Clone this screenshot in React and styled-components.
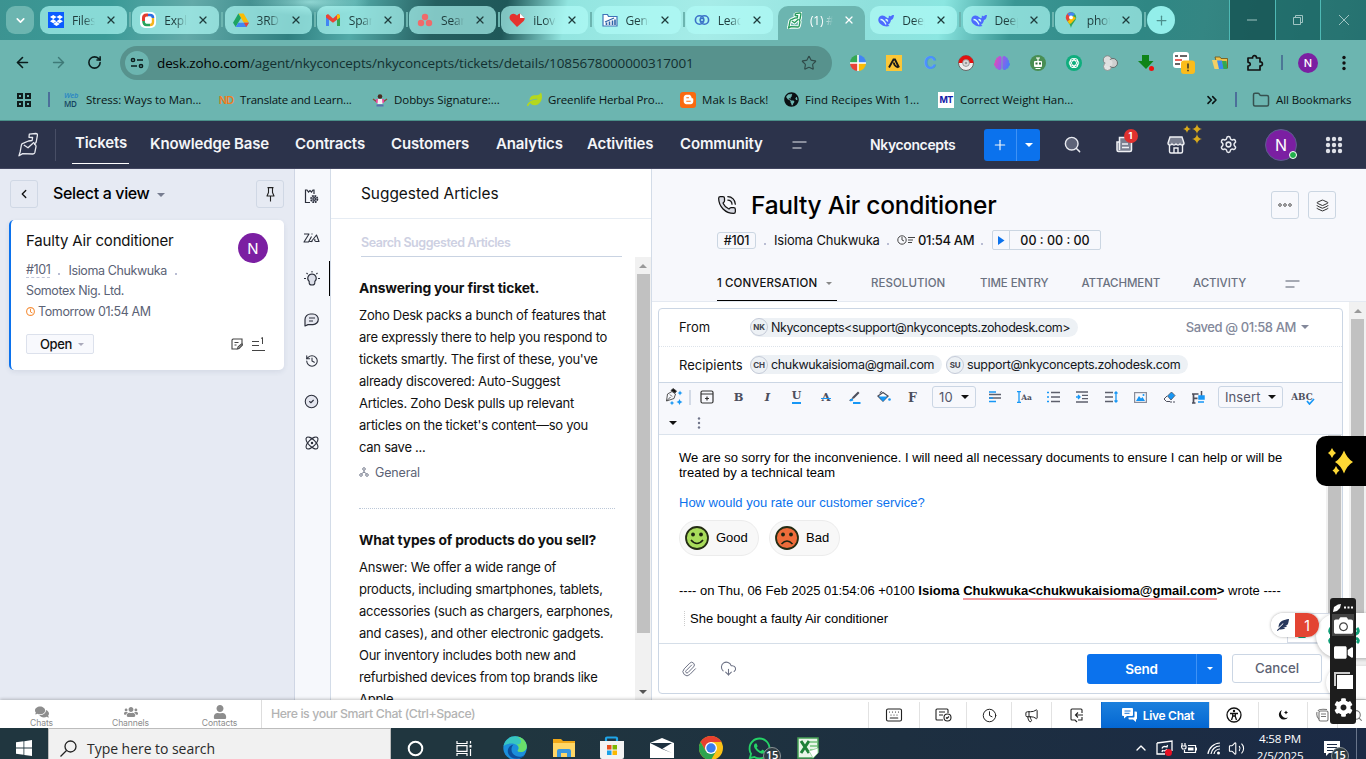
import React from "react";
import styled, { createGlobalStyle, css } from "styled-components";
import {
  FaDropbox, FaBloggerB, FaGlobeAmericas, FaLeaf, FaBrain, FaComments,
  FaUsers, FaUser, FaFeatherAlt, FaWhatsapp, FaCog, FaCamera, FaVideo, FaHeart,
} from "react-icons/fa";
import {
  ArrowLeft, ArrowRight, RotateCw, Star, Folder, ChevronsRight, ChevronDown, ChevronLeft, X, Plus,
  Search, History, CircleCheck, Atom, PhoneCall, Layers, Paperclip,
  CloudDownload, Keyboard, Clock, Megaphone, Settings, Volume2, ChevronUp,
} from "lucide-react";

const UI = '"Inter", "Liberation Sans", sans-serif';
const SEGOE = '"Open Sans", "Noto Sans", sans-serif';

const GlobalStyle = createGlobalStyle`
  * { box-sizing: border-box; }
  html, body { margin: 0; height: 759px; overflow: hidden; background: #fff; }
  svg { display: block; flex: none; }
`;

const Page = styled.div`
  position: relative;
  width: 1366px;
  height: 759px;
  overflow: hidden;
  display: flex;
  flex-direction: column;
  font-family: ${UI};
  color: #111;
`;

const Text = styled.span`
  font-size: ${(p) => p.$size || 13}px;
  font-weight: ${(p) => p.$weight || 400};
  letter-spacing: ${(p) => p.$track || 0}px;
  color: ${(p) => p.$color || "inherit"};
  white-space: nowrap;
`;

/* ---------- browser chrome ---------- */

const TabStrip = styled.div`
  height: 40px;
  flex: none;
  display: flex;
  padding-left: 6px;
  background:
    radial-gradient(60px 14px at 310px 2px, rgba(180, 245, 240, 0.7), transparent),
    linear-gradient(100deg, #3c9391 0, #3a9a97 110px, #63aaa9 190px, #2f7f80 290px, #52aaa8 350px,
      #255f60 430px, #1f5859 500px, #92e5e0 560px, #a6ece8 700px, #8fe0dc 860px, #8be6e1 930px,
      #3a9694 1000px, #2f8784 1130px, #348683 1190px, #2b7471 1366px);
`;

const RoundButton = styled.div`
  width: 28px;
  height: 28px;
  margin-top: 6px;
  border-radius: ${(p) => (p.$circle ? 14 : 9)}px;
  background: ${(p) => (p.$circle ? "#93eeea" : "#6cb5b0")};
  display: flex;
  align-items: center;
  justify-content: center;
`;

const Tabs = styled.div`
  display: flex;
  width: 1107px;
  margin-left: 6px;
  font-family: ${SEGOE};
`;

const TabSlot = styled.div`
  flex: 1 1 0;
  height: 40px;
  display: flex;
  padding-top: 6px;
`;

const Tab = styled.div`
  width: 87px;
  height: ${(p) => (p.$active ? 34 : 28)}px;
  padding: 0 10px 0 8px;
  display: flex;
  align-items: center;
  border-radius: ${(p) => (p.$active ? "10px 10px 0 0" : "9px")};
  background: ${(p) => (p.$active ? "#6cb5b0" : "rgba(178, 252, 248, 0.66)")};
  color: ${(p) => (p.$active ? "#fff" : "#1f3d3d")};
  padding-bottom: ${(p) => (p.$active ? 6 : 0)}px;
`;

const TabTitle = styled.span`
  width: 24px;
  margin: 0 9px 0 8px;
  overflow: hidden;
  font-size: 12px;
  letter-spacing: -0.2px;
  white-space: nowrap;
  mask-image: linear-gradient(90deg, #000 50%, transparent 96%);
`;

const TabSeparator = styled.i`
  width: 2px;
  height: 15px;
  margin: 6px 0 0 2px;
  background: ${(p) => (p.$hidden ? "transparent" : "#6cb5b0")};
`;

const WindowControls = styled.div`
  margin-left: auto;
  width: 137px;
  display: flex;
`;

const WindowButton = styled.div`
  flex: 1;
  display: flex;
  align-items: center;
  justify-content: center;
  border-left: 1px solid #4fb9b5;
  background: ${(p) => p.$bg};
`;

const Toolbar = styled.div`
  height: 45px;
  flex: none;
  display: flex;
  align-items: center;
  background: #6cb5b0;
  color: #0a1c1c;
`;

const Slot = styled.div`
  width: ${(p) => p.$w}px;
  flex: none;
  display: flex;
  align-items: center;
  justify-content: ${(p) => p.$justify || "center"};
`;

const Omnibox = styled.div`
  width: 712px;
  height: 34px;
  margin: 1px 8px 0 8px;
  padding: 0 15px 0 5px;
  border-radius: 17px;
  background: #57928d;
  display: flex;
  align-items: center;
  font-family: ${SEGOE};
  color: #123030;
  b { font-weight: 400; color: #000; }
`;

const SiteInfo = styled.div`
  width: 24px;
  height: 24px;
  margin-right: 8px;
  border-radius: 12px;
  background: #6cb5b0;
  display: flex;
  align-items: center;
  justify-content: center;
`;

const Url = styled.span`
  flex: 1;
  font-size: 13.5px;
  letter-spacing: -0.11px;
  white-space: nowrap;
`;

const Divider = styled.i`
  width: 2px;
  height: 15px;
  background: ${(p) => p.$color || "#4c7796"};
`;

const ChromeAvatar = styled.div`
  width: 20px;
  height: 20px;
  border-radius: 50%;
  background: #7b1fa2;
  color: #fff;
  font: 500 11px ${UI};
  display: flex;
  align-items: center;
  justify-content: center;
`;

const Bookmarks = styled.div`
  height: 36px;
  flex: none;
  display: flex;
  align-items: center;
  padding-bottom: 6px;
  border-bottom: 1px solid #4a8f89;
  background: #6cb5b0;
  font-family: ${SEGOE};
  color: #0a1414;
`;

const Bookmark = styled.div`
  width: ${(p) => p.$w}px;
  flex: none;
  display: flex;
  align-items: center;
  gap: 6px;
  font-size: 11.5px;
  letter-spacing: ${(p) => p.$track ?? -0.2}px;
  white-space: nowrap;
`;

const Badge16 = styled.span`
  width: 16px;
  height: 16px;
  flex: none;
  display: flex;
  align-items: center;
  justify-content: center;
  border-radius: ${(p) => p.$r || 0}px;
  background: ${(p) => p.$bg || "transparent"};
  color: ${(p) => p.$c || "#000"};
  font: ${(p) => p.$weight || 700} ${(p) => p.$size || 11}px/8px ${UI};
  letter-spacing: -0.8px;
`;

const WebMdMark = styled.span`
  width: 16px;
  flex: none;
  display: flex;
  flex-direction: column;
  gap: 1px;
  font: 600 8px/8px "Open Sans", sans-serif;
  letter-spacing: -0.3px;
  color: #14425f;
  i { color: #2a86c4; font-size: 7.5px; line-height: 7px; }
`;

/* ---------- application header ---------- */

const AppHeader = styled.header`
  height: 48px;
  flex: none;
  display: flex;
  align-items: center;
  background: #2c334b;
  border-bottom: 1px solid #424660;
  color: #f4f5f8;
`;

const HeaderRule = styled.i`
  width: 1px;
  height: 32px;
  background: #484e65;
  margin-right: 16px;
`;

const NavItem = styled.a`
  width: ${(p) => p.$w}px;
  height: 47px;
  flex: none;
  display: flex;
  align-items: center;
  padding: 0 0 3px 1px;
  font-size: 15px;
  font-weight: 600;
  letter-spacing: -0.14px;
  white-space: nowrap;
`;

const NavActive = styled.span`
  width: 57px;
  height: 38px;
  margin: 3px 0 0 -1px;
  padding: 0 0 4px 3px;
  display: flex;
  align-items: center;
  border-bottom: 1px solid #fff;
`;

const AddButton = styled.div`
  width: 56px;
  height: 32px;
  flex: none;
  display: flex;
  align-items: center;
  border-radius: 3px;
  background: #0b72ed;
`;

const AddPart = styled.div`
  width: ${(p) => p.$w}px;
  height: 100%;
  display: flex;
  align-items: center;
  justify-content: center;
  border-left: ${(p) => (p.$rule ? "1px solid #3f92f5" : "0")};
`;

const Caret = styled.i`
  width: 0;
  height: 0;
  flex: none;
  border: ${(p) => p.$s || 4}px solid transparent;
  border-top-color: ${(p) => p.$c || "#222"};
  border-bottom: 0;
  margin: ${(p) => p.$m || 0};
`;

const Relative = styled.div`
  position: relative;
  display: flex;
`;

const CountBadge = styled.span`
  position: absolute;
  left: 8px;
  top: -7px;
  width: 14px;
  height: 14px;
  border-radius: 50%;
  background: #e0312f;
  color: #fff;
  font: 700 9px/14px ${UI};
  text-align: center;
`;

const Stars = styled.svg`
  position: absolute;
  left: 16px;
  top: -12px;
`;

const Avatar = styled.div`
  position: relative;
  width: ${(p) => p.$s}px;
  height: ${(p) => p.$s}px;
  flex: none;
  border-radius: 50%;
  background: #7b1fa2;
  color: #fff;
  display: flex;
  align-items: center;
  justify-content: center;
  font-size: ${(p) => p.$font}px;
  border: ${(p) => (p.$ring ? "1px solid #5a5f8c" : "0")};
`;

const Online = styled.i`
  position: absolute;
  right: -1px;
  bottom: 1px;
  width: 8px;
  height: 8px;
  border-radius: 50%;
  background: #22b04b;
  border: 1px solid #fff;
`;

/* ---------- main columns ---------- */

const Main = styled.main`
  height: 531px;
  flex: none;
  display: flex;
`;

const ListPane = styled.section`
  width: 295px;
  flex: none;
  padding: 11px 10px 0 9px;
  background: #e6eaf3;
  border-right: 1px solid #cfd6e4;
`;

const ListHeader = styled.div`
  height: 28px;
  display: flex;
  align-items: center;
  padding-left: 1px;
`;

const ViewPicker = styled.div`
  width: 218px;
  height: 28px;
  padding: 0 0 2px 15px;
  display: flex;
  align-items: center;
`;

const SquareButton = styled.div`
  width: 28px;
  height: 28px;
  flex: none;
  display: flex;
  align-items: center;
  justify-content: center;
  border: 1px solid ${(p) => p.$line || "#d0d8e5"};
  border-radius: 3px;
`;

const TicketCard = styled.article`
  width: 275px;
  height: 150px;
  margin-top: 12px;
  padding: 11px 16px 0 15px;
  background: #fff;
  border-left: 2px solid #0b72ed;
  border-radius: 5px;
  box-shadow: 0 2px 5px rgba(60, 80, 120, 0.1);
`;

const CardTop = styled.div`
  display: flex;
  justify-content: space-between;
  height: 34px;
  margin-bottom: -4px;
`;

const MetaRow = styled.div`
  height: ${(p) => p.$h || 20}px;
  display: flex;
  align-items: center;
  gap: ${(p) => p.$gap || 0}px;
  font-size: 12.5px;
  letter-spacing: -0.38px;
  color: #5b6275;
  white-space: nowrap;
`;

const TicketId = styled.span`
  border-bottom: 1px dashed #c2c6d8;
  line-height: 14px;
`;

const Dot = styled.i`
  width: 2px;
  height: 2px;
  background: #b9bdd3;
  margin-top: 7px;
`;

const CardFooter = styled.div`
  display: flex;
  align-items: center;
  margin-top: 13px;
`;

const StatusButton = styled.div`
  width: 68px;
  height: 20px;
  display: flex;
  align-items: center;
  padding: 0 0 1px 13px;
  border: 1px solid #dce1ec;
  border-radius: 2px;
  background: #f8f9fd;
`;

const Underlined = styled.div`
  width: 13px;
  height: 14px;
  margin-left: 9px;
  border-bottom: 1px solid #444;
  display: flex;
  justify-content: flex-end;
`;

const Rail = styled.nav`
  width: 36px;
  flex: none;
  padding: 7px 2px 0 0;
  background: #f6f8fc;
  border-right: 1px solid #d3dce8;
`;

const RailItem = styled.div`
  height: 41px;
  display: flex;
  align-items: center;
  justify-content: center;
  position: relative;
  color: #2b2f3b;
`;

const RailMark = styled.i`
  position: absolute;
  right: -2px;
  top: 3px;
  width: 1px;
  height: 35px;
  background: #000;
`;

const Articles = styled.section`
  width: 321px;
  flex: none;
  display: flex;
  flex-direction: column;
  border-right: 1px solid #d3dce8;
  background: #fff;
`;

const ArticlesTitle = styled.h2`
  height: 50px;
  flex: none;
  margin: 0;
  padding-left: 30px;
  border-bottom: 1px solid #e6ecf3;
  font-size: 15.4px;
  font-weight: 400;
  line-height: 50px;
`;

const SearchField = styled.div`
  width: 261px;
  height: 38px;
  flex: none;
  margin-left: 30px;
  padding-top: 16px;
  border-bottom: 1px solid #c9d3e2;
  font-size: 12.5px;
  font-weight: 600;
  letter-spacing: -0.45px;
  line-height: 16px;
  color: #cdd0e2;
`;

const ArticleScroll = styled.div`
  flex: 1;
  min-height: 0;
  display: flex;
  overflow: hidden;
`;

const ArticleList = styled.div`
  flex: 1;
  padding: 20px 0 0 28px;
`;

const ArticleItem = styled.article`
  width: 256px;
  height: ${(p) => p.$h}px;
  margin-bottom: 20px;
  border-bottom: 1px dotted #bcc8d8;
  white-space: nowrap;
`;

const ArticleHeading = styled.h3`
  margin: 0 0 5px;
  font-size: 13.8px;
  font-weight: 700;
  letter-spacing: -0.13px;
  line-height: 22px;
`;

const ArticleLine = styled.div`
  font-size: 13px;
  letter-spacing: -0.26px;
  line-height: 22px;
`;

const Category = styled.div`
  display: flex;
  align-items: center;
  gap: 6px;
  height: 22px;
  margin-top: 3px;
  color: #5b6275;
  font-size: 12.5px;
  letter-spacing: -0.15px;
`;

const ScrollTrack = styled.div`
  width: ${(p) => p.$w || 16}px;
  flex: none;
  display: flex;
  flex-direction: column;
  align-items: center;
  justify-content: space-between;
  padding: ${(p) => p.$pad || "7px 0 6px"};
  background: #f1f1f1;
`;

const ScrollThumb = styled.i`
  width: 13px;
  height: ${(p) => p.$h}px;
  background: #c1c1c1;
  margin-bottom: auto;
  margin-top: ${(p) => p.$mt || 0}px;
`;

const ScrollUp = styled.i`
  border: 4px solid transparent;
  border-bottom-color: #999;
  border-top: 0;
`;

/* ---------- ticket ---------- */

const Ticket = styled.section`
  flex: 1;
  display: flex;
  flex-direction: column;
  min-width: 0;
`;

const TicketHeader = styled.div`
  height: 133px;
  flex: none;
  background: #f7f8fc;
  border-bottom: 1px solid #e4e9f1;
`;

const TitleRow = styled.div`
  height: 72px;
  display: flex;
  align-items: center;
  padding: 0 30px 0 65px;
`;

const Title = styled.h1`
  flex: 1;
  margin: 0 0 0 14px;
  font-size: 24.5px;
  font-weight: 500;
  letter-spacing: -0.26px;
  color: #000;
`;

const InfoRow = styled.div`
  display: flex;
  height: 20px;
  margin-top: -11px;
  margin-left: 65px;
  align-items: center;
`;

const IdTag = styled.span`
  width: 39px;
  height: 17px;
  border: 1px solid #cbd6e2;
  border-radius: 3px;
  text-align: center;
  font-size: 12.5px;
  font-weight: 500;
  line-height: 15px;
  letter-spacing: -0.2px;
`;

const Timer = styled.div`
  width: 109px;
  height: 20px;
  border: 1px solid #cbd6e2;
  border-radius: 2px;
  display: flex;
  align-items: center;
`;

const PlayCell = styled.div`
  width: 17px;
  height: 18px;
  display: flex;
  align-items: center;
  justify-content: center;
  border-right: 1px solid #cbd6e2;
`;

const DetailTabs = styled.div`
  display: flex;
  height: 35px;
  margin: 16px 0 0 65px;
  font-size: 11.5px;
  font-weight: 500;
  line-height: 34px;
  color: #6a7180;
  white-space: nowrap;
`;

const DetailTab = styled.div`
  width: ${(p) => p.$w}px;
  letter-spacing: ${(p) => p.$track || 0}px;
`;

const ActiveDetailTab = styled.div`
  width: 120px;
  height: 35px;
  margin-right: 34px;
  display: flex;
  align-items: center;
  color: #111;
  border-bottom: 1px solid #000;
`;

const TicketBody = styled.div`
  flex: 1;
  min-height: 0;
  display: flex;
  background: #fff;
`;

const Editor = styled.div`
  width: 685px;
  height: 386px;
  margin: 6px 6px 0 6px;
  flex: none;
  border: 1px solid #cbd6e4;
  border-radius: 4px;
  display: flex;
  flex-direction: column;
`;

const AddressRow = styled.div`
  height: ${(p) => p.$h}px;
  flex: none;
  display: flex;
  align-items: center;
  padding: 0 0 ${(p) => p.$pb || 0}px 20px;
  border-bottom: 1px ${(p) => p.$line};
`;

const FieldName = styled.span`
  width: 71px;
  flex: none;
  font-size: 13px;
  letter-spacing: 0;
`;

const Chip = styled.div`
  height: 19px;
  display: flex;
  align-items: center;
  width: ${(p) => p.$w}px;
  margin-right: 4px;
  border-radius: 10px;
  background: #edf1f5;
  font-size: 12.5px;
  letter-spacing: ${(p) => p.$track}px;
  white-space: nowrap;
  color: #15171c;
`;

const Initials = styled.span`
  width: 18px;
  height: 18px;
  flex: none;
  margin-right: 3px;
  border: 1px solid #c5cbd8;
  border-radius: 50%;
  text-align: center;
  font-size: 8px;
  font-weight: 700;
  line-height: 16px;
  letter-spacing: -0.2px;
  color: #40434c;
`;

const FormatBar = styled.div`
  height: 52px;
  flex: none;
  background: #f7f8fc;
  border-bottom: 1px solid #dbe3ec;
  color: #4d4f5c;
`;

const FormatRow = styled.div`
  height: ${(p) => p.$h}px;
  display: flex;
  align-items: center;
`;

const Select = styled.div`
  width: ${(p) => p.$w}px;
  height: 22px;
  display: flex;
  align-items: center;
  justify-content: space-between;
  padding: 0 6px 1px 6px;
  border: 1px solid #cbd6e4;
  border-radius: 3px;
  font-size: 13px;
  letter-spacing: 0.1px;
  color: #55576a;
`;

const Glyph = styled.span`
  font-family: "DejaVu Serif", serif;
  font-weight: 700;
  font-size: ${(p) => p.$size || 11.5}px;
  line-height: 13px;
  ${(p) => p.$italic && css`font-style: italic;`}
  ${(p) => p.$under && css`border-bottom: 2px solid #1797f5; line-height: 10px; padding-bottom: 1px;`}
`;

const MessagePane = styled.div`
  flex: 1;
  min-height: 0;
  display: flex;
`;

const Message = styled.div`
  flex: 1;
  padding: 15px 0 0 20px;
  font-family: "Liberation Sans", Arial, sans-serif;
  font-size: 13px;
  line-height: 15px;
  color: #000;
  white-space: nowrap;
`;

const Paragraph = styled.div`
  margin-bottom: ${(p) => p.$mb || 0}px;
`;

const RatingRow = styled.div`
  display: flex;
  gap: 10px;
  margin: 10px 0 27px;
`;

const Rating = styled.div`
  width: ${(p) => p.$w}px;
  height: 36px;
  display: flex;
  align-items: center;
  gap: 7px;
  padding: 0 0 1px 5px;
  border: 1px solid #ececec;
  border-radius: 18px;
  background: #f8f8f8;
`;

const Misspelt = styled.b`
  border-bottom: 2px solid #f59aa0;
`;

const Quote = styled.div`
  margin: 13px 0 0 5px;
  padding-left: 5px;
  border-left: 1px dotted #ccc;
`;

const EditorFooter = styled.div`
  height: 50px;
  flex: none;
  display: flex;
  align-items: center;
  border-top: 1px solid #d5dee8;
  padding-left: 22px;
  color: #6d7285;
`;

const SendButton = styled.div`
  width: 135px;
  height: 30px;
  display: flex;
  border-radius: 3px;
  background: #0b72ed;
  color: #fff;
`;

const CancelButton = styled.div`
  width: 90px;
  height: 29px;
  margin-left: 10px;
  border: 1px solid #cbd6e4;
  border-radius: 3px;
  text-align: center;
  line-height: 27px;
  font-size: 13.3px;
  font-weight: 500;
  color: #5d6273;
  background: #fff;
`;

/* ---------- bottom bars ---------- */

const ChatBar = styled.footer`
  height: 28px;
  flex: none;
  display: flex;
  background: #fff;
  box-shadow: 0 -1px 3px rgba(0, 0, 0, 0.22);
  z-index: 1;
`;

const ChatTab = styled.div`
  width: 89px;
  margin-left: ${(p) => p.$ml || 0}px;
  padding-top: 5px;
  display: flex;
  flex-direction: column;
  align-items: center;
  font-size: 8.6px;
  line-height: 9px;
  letter-spacing: -0.12px;
  color: #8d8d8d;
`;

const ChatInput = styled.div`
  width: 607px;
  margin-left: -3px;
  padding-left: 9px;
  border-left: 1px solid #ddd;
  font-size: 12.3px;
  letter-spacing: -0.4px;
  font-weight: 500;
  line-height: 27px;
  color: #b3b3b3;
`;

const StatusCell = styled.div`
  width: ${(p) => p.$w}px;
  flex: none;
  margin-top: 2px;
  padding-left: ${(p) => p.$pl || 0}px;
  display: flex;
  align-items: center;
  justify-content: center;
  border-left: 1px solid ${(p) => (p.$blue ? "#0b68cf" : "#e2e2e2")};
  background: ${(p) => (p.$blue ? "linear-gradient(#1c80dd, #0467d2)" : "#fff")};
  color: ${(p) => (p.$blue ? "#fff" : "#222")};
  gap: 5px;
  font-size: 12px;
  font-weight: 600;
  letter-spacing: -0.3px;
  white-space: nowrap;
`;

const Taskbar = styled.div`
  height: 31px;
  flex: none;
  display: flex;
  align-items: flex-start;
  overflow: hidden;
  background: linear-gradient(90deg, #20363f 0, #20363f 500px, #1d2f40 900px, #1b2a45 1366px);
  font-family: ${SEGOE};
  color: #fff;
  z-index: 2;
`;

const TaskSlot = styled.div`
  width: ${(p) => p.$w}px;
  height: 40px;
  flex: none;
  display: flex;
  align-items: center;
  justify-content: center;
`;

const TaskSearch = styled.div`
  width: 343px;
  height: 40px;
  flex: none;
  display: flex;
  align-items: center;
  padding-left: 11px;
  gap: 10px;
  border: 1px solid #bcbcbc;
  background: #f1f1f1;
  font-size: 14px;
  letter-spacing: -0.04px;
  color: #2a2a2a;
`;

const TaskBadge = styled.span`
  position: absolute;
  left: ${(p) => p.$x}px;
  top: ${(p) => p.$y}px;
  width: 18px;
  height: 18px;
  border-radius: 50%;
  background: #2f3c42;
  border: 1px solid #8b9296;
  font: 600 11px/14px ${SEGOE};
  letter-spacing: -0.4px;
  text-align: center;
`;

const ClockBlock = styled.div`
  width: 58px;
  flex: none;
  margin-left: 5px;
  font-size: 11.6px;
  line-height: 17px;
  letter-spacing: -0.2px;
  text-align: center;
  padding-top: 2px;
  white-space: nowrap;
`;

/* ---------- floating tools ---------- */

const SparkleButton = styled.div`
  position: absolute;
  left: 1316px;
  top: 436px;
  width: 50px;
  height: 50px;
  border-radius: 10px 0 0 10px;
  background: #000;
  display: flex;
  align-items: center;
  justify-content: center;
`;

const HintFrame = styled.div`
  position: absolute;
  left: 1287px;
  top: 613px;
  width: 50px;
  height: 30px;
  border: 1px solid #d5dbe6;
  background: #fff;
  display: flex;
  align-items: flex-end;
  justify-content: flex-start;
  padding: 0 0 4px 10px;
`;

const GreenTick = styled.i`
  width: 8px;
  height: 3px;
  border-radius: 2px;
  background: #0f9d76;
`;

const AssistantBubble = styled.div`
  position: absolute;
  left: 1316px;
  top: 613px;
  width: 60px;
  height: 45px;
  border-radius: 23px 0 0 23px;
  background: #fff;
  box-shadow: 0 1px 4px rgba(0, 0, 0, 0.3);
  display: flex;
  align-items: center;
  padding-left: 12px;
`;

const SecondBubble = styled(AssistantBubble)`
  left: 1326px;
  top: 666px;
  height: 33px;
  border-radius: 17px 0 0 17px;
  box-shadow: 0 1px 4px rgba(0, 0, 0, 0.2);
`;

const ErrorPill = styled.div`
  position: absolute;
  left: 1271px;
  top: 613px;
  width: 48px;
  height: 24px;
  display: flex;
  border-radius: 12px;
  overflow: hidden;
  background: #fff;
  box-shadow: 0 0 3px rgba(0, 0, 0, 0.35);
`;

const PillHalf = styled.div`
  width: 24px;
  display: flex;
  align-items: center;
  justify-content: center;
  background: ${(p) => p.$bg || "#fff"};
  color: ${(p) => p.$c};
  font-size: 14px;
`;

const Recorder = styled.div`
  position: absolute;
  left: 1330px;
  top: 598px;
  width: 26px;
  height: 126px;
  z-index: 3;
  padding-top: 3px;
  display: flex;
  flex-direction: column;
  align-items: center;
  border-radius: 3px;
  background: #1d1d1d;
  color: #fff;
`;

const RecorderItem = styled.div`
  width: 22px;
  height: ${(p) => p.$h}px;
  display: flex;
  align-items: center;
  justify-content: center;
  gap: 3px;
  background: ${(p) => p.$bg || "transparent"};
`;

/* ---------- drawings ---------- */

const Svg = ({ w = 16, h, box, children, ...rest }) => (
  <svg width={w} height={h || w} viewBox={box || `0 0 ${w} ${h || w}`} fill="none" {...rest}>
    {children}
  </svg>
);

const Maestro = () => (
  <Svg><rect width="16" height="16" rx="5" fill="#fff" />
    <path d="M3.500 9V6q0-3 3-3H8" stroke="#e33b2e" strokeWidth="3" /><path d="M8 3h2q3 0 3 3" stroke="#2b6fe0" strokeWidth="2.600" />
    <path d="M13 6v4q0 3-3 3" stroke="#f4b51e" strokeWidth="2.400" /><path d="M10 13H6.500q-3 0-3-4" stroke="#27a35a" strokeWidth="2.600" /></Svg>
);
const Drive = () => (
  <Svg><path d="M5.400 1.500h5.200L16 10.700h-5.200z" fill="#fbbc04" /><path d="M5.400 1.500 8 6 2.700 15 0 10.700z" fill="#1ea362" /><path d="M5.300 10.700H16L13.300 15H2.700z" fill="#4285f4" /><path d="M13.400 10.700H16L13.300 15l-2.500-4.300z" fill="#ea4335" /></Svg>
);
const Gmail = () => (
  <Svg><path d="M1 4v10h3V7z" fill="#4285f4" /><path d="M15 4v10h-3V7z" fill="#34a853" /><path d="M1 3.200 3 2l5 4.400L13 2l2 1.200v2.300l-7 5.200-7-5.200z" fill="#ea4335" /><path d="M12 3l1-1 2 1.200v2.300l-3 2.200z" fill="#fbbc04" /></Svg>
);
const Asana = () => (
  <Svg><circle cx="8" cy="5" r="3.200" fill="#f06a6a" /><circle cx="4" cy="11" r="3.200" fill="#f06a6a" /><circle cx="12" cy="11" r="3.200" fill="#f06a6a" /></Svg>
);
const HeartFile = () => (
  <Svg><path d="M8 15 1.500 8.300Q-.5 5 1.700 2.700 5 .3 8 3.500 9 2 11 1.500L15.500 6q.5 1.500-.8 3z" fill="#e5322d" /><path d="M11 1.500V6h4.500z" fill="#fff" /></Svg>
);
const GenIcon = () => (
  <Svg><path d="M1 2.500h4.500l1 2H15v9.500H1z" fill="#fff" stroke="#3f74b8" strokeWidth="1.200" /><path d="M4.500 13v-2.500M7.500 13V9.500M10.500 13V8.500M13 13V7.500" stroke="#2e63a8" strokeWidth="1.600" /><path d="M3 10 12 6" stroke="#2e63a8" strokeWidth="1.200" /></Svg>
);
const LeadIcon = () => (
  <Svg><circle cx="5.600" cy="8" r="4.200" stroke="#3c73c8" strokeWidth="1.600" /><circle cx="10.400" cy="8" r="4.200" stroke="#3c73c8" strokeWidth="1.600" /><circle cx="8" cy="8" r="1.700" stroke="#3c73c8" strokeWidth="1.200" /></Svg>
);
const deskPath = "M11.300 2.200 17.800 1.500Q19.700 1.600 19.400 3.300L18.200 10Q17.900 11.300 16.500 11.600M11.300 2.200 11 5.300 14.600 5.500 14.100 8.500 10.500 9 5.500 11.200Q3.700 11.600 3.400 13L2.200 19.700 1 23.800 4.700 21.600 15 22Q16.500 22 16.800 20.700L18 14.700Q18.200 12.600 16.500 12.300M6.200 13.300 10 15.800 15.800 10.600"; 
const DeskMark = () => (
  <Svg w={20} h={25}><path d={deskPath} stroke="#e8eaf0" strokeWidth="1.300" strokeLinejoin="round" strokeLinecap="round" /></Svg>
);
const DeskFavicon = () => (
  <Svg w={15} h={17} box="-1 0 22 25"><path d={deskPath} stroke="#f4fffa" strokeWidth="5" strokeLinejoin="round" /><path d={deskPath} stroke="#269a5c" strokeWidth="2" strokeLinejoin="round" /></Svg>
);
const Whale = () => (
  <Svg><path d="M.3 7.500C.6 4 4 2.600 6.500 4c1.500.8 2.300 2 3.500 2.200 1 .2.600-1.700 1-2.700.8 1 2 .8 3-.2.600-.3 1.300-.3 2-.3-.3 3-1.200 4.500-3 5-.5 2.500-1.500 4-3 4.500l1.500 1.500c-3 .8-6 .3-8-1.200C1.500 11.500 0 9.500.3 7.500z" fill="#4d6bfe" /><path d="M2.500 7.500c3 0 4 2 5.500 5M7.500 7.500q1.800 0 2.300 2" stroke="#d7fdfb" strokeWidth="1.300" /></Svg>
);
const MapPin = () => (
  <Svg><path d="M8 0a5.200 5.200 0 0 1 5.200 5.500C13.200 9 9 11 8 16c-.7-3-2-4.600-3.400-6.500z" fill="#34a853" /><path d="M2.800 5.500A5.200 5.200 0 0 1 8 0v5.500L4.600 9.500C3.500 8.200 2.800 7 2.800 5.500z" fill="#ea4335" /><path d="M4.600 9.500 10 4l3 2-5 5.500L6.500 12z" fill="#fbbc04" /><path d="M4.300 2A5 5 0 0 1 12 2.200L8 5.500z" fill="#4285f4" /><circle cx="8" cy="5.400" r="1.900" fill="#fff" /></Svg>
);
const Disc = () => (
  <Svg><path d="M8 8V0a8 8 0 0 0-8 8z" fill="#34a853" /><path d="M8 8h8a8 8 0 0 0-8-8z" fill="#4285f4" /><path d="M8 8v8a8 8 0 0 0 8-8z" fill="#fbbc04" /><path d="M8 8H0a8 8 0 0 0 8 8z" fill="#ea4335" /><path d="M8 0v16M0 8h16" stroke="#fff" strokeWidth="1.600" /></Svg>
);
const Apollo = () => (
  <Svg><rect width="16" height="16" fill="#fbc737" /><path d="M3 12.500 7.500 4.500h1.500l4 8M8 7.500q-.5 3 4 5" stroke="#1a1a1a" strokeWidth="1.900" /></Svg>
);
const Ball = () => (
  <Svg><circle cx="8" cy="8" r="7.500" fill="#eee" stroke="#666" /><path d="M.5 8a7.500 7.500 0 0 1 15 0z" fill="#e2120f" /><circle cx="8" cy="8" r="3.400" fill="#ddd" stroke="#888" strokeWidth=".8" /><circle cx="8" cy="8" r="1.300" fill="#999" /></Svg>
);
const Brain = () => (
  <>
    <svg width="0" height="0"><defs><linearGradient id="brain" x1="0" y1="0" x2="1" y2=".3"><stop offset="0" stopColor="#ef4fa0" /><stop offset=".5" stopColor="#a457e8" /><stop offset="1" stopColor="#4d7bf5" /></linearGradient></defs></svg>
    <FaBrain size={16} style={{ fill: "url(#brain)" }} />
  </>
);
const RobotBadge = () => (
  <Svg><circle cx="8" cy="8" r="8" fill="#488e53" /><rect x="4" y="6" width="8" height="6" rx="1" fill="#fff" /><rect x="5.500" y="7.500" width="2" height="2" fill="#2f6b3b" /><rect x="9" y="7.500" width="2" height="2" fill="#2f6b3b" /><path d="M8 6V3M6 3h4M5.500 13.500h5" stroke="#fff" strokeWidth="1.200" /></Svg>
);
const Knot = () => (
  <Svg><circle cx="8" cy="8" r="8" fill="#0fae7d" />
    {[0, 60, 120].map((a) => <rect key={a} x="3.200" y="5.600" width="9.600" height="4.800" rx="2.400" stroke="#fff" strokeWidth=".9" transform={`rotate(${a} 8 8)`} />)}</Svg>
);
const Blobs = () => (
  <Svg><circle cx="5.500" cy="5" r="4.200" fill="#ddd" stroke="#777" strokeWidth=".8" /><circle cx="5.500" cy="11.500" r="4" fill="#e5e5e5" stroke="#888" strokeWidth=".8" /><circle cx="11" cy="8" r="4.500" fill="#cfcfcf" stroke="#555" strokeWidth=".8" /><circle cx="7" cy="8" r="3.500" fill="#e0e0e0" /></Svg>
);
const DownArrow = () => (
  <Svg><path d="M4 0h7v6h4.500L8 14 0 6h4z" fill="#0f8419" /><circle cx="13.500" cy="13.500" r="2.500" fill="#f01010" /></Svg>
);
const ListAlert = () => (
  <Svg w={22} h={22}><rect width="16" height="16" rx="3" fill="#fff" /><path d="M2 4h3M7 4h7M2 12h5" stroke="#333" strokeWidth="1.700" /><path d="M2 8h7" stroke="#e8453c" strokeWidth="1.700" /><rect x="8" y="8.500" width="14" height="13.500" rx="3" fill="#fbbc1c" /><path d="M15 11.500v5M15 17.800v1.400" stroke="#2a2a2a" strokeWidth="1.400" /></Svg>
);
const Folders = () => (
  <Svg><path d="M3 2h5l1 1.500h6.500V13H6z" fill="#f0c14a" stroke="#6d5210" strokeWidth=".8" /><path d="M0 5h6l2 9H2.500z" fill="#f5d064" /><path d="M5 5.500h5l2 8.500H7z" fill="#3b8bf0" /><path d="M10 6h4.500l1 8h-4z" fill="#32a852" /></Svg>
);
const Puzzle = () => (
  <Svg w={18}><path d="M2 4h4.600c-.6-3.200 4.300-3.200 3.800 0H14V8c3.200-.5 3.200 4.300 0 3.800V16H2v-4c3 .2 3-3.900 0-3.700z" stroke="#111" strokeWidth="1.700" strokeLinejoin="round" /></Svg>
);
const Tune = () => (
  <Svg w={14} stroke="#0a1c1c" strokeWidth="1.500"><circle cx="3" cy="4" r="1.600" /><path d="M7 4h6M1 10h6" /><circle cx="11" cy="10" r="1.600" /></Svg>
);
const AppsGrid = () => (
  <Svg w={14} stroke="#101c1c" strokeWidth="2"><rect x="1" y="1" width="4" height="4" /><rect x="9" y="1" width="4" height="4" /><rect x="1" y="9" width="4" height="4" /><rect x="9" y="9" width="4" height="4" /></Svg>
);
const Doll = () => (
  <Svg><circle cx="8" cy="4.500" r="2.300" fill="#4a2b20" /><path d="M1 7l4 3M15 7l-4 3" stroke="#8a4a35" strokeWidth="1.300" /><path d="M4 7h2.500v4H4zM9.500 7H12v4H9.500z" fill="#e64aa0" /><path d="M6 7h4l.5 5h-5z" fill="#f2f2f2" /><path d="M4.500 13.500h7" stroke="#5a6fb0" strokeWidth="2" /></Svg>
);
const Dots9 = () => (
  <Svg w={18}>{[3, 9, 15].map((y) => [3, 9, 15].map((x) => <circle key={`${x}-${y}`} cx={x} cy={y} r="2.200" fill="#dfe1e8" />))}</Svg>
);
const star4 = (x, y, r) => `M${x} ${y - r}Q${x + r * 0.15} ${y - r * 0.15} ${x + r} ${y}Q${x + r * 0.15} ${y + r * 0.15} ${x} ${y + r}Q${x - r * 0.15} ${y + r * 0.15} ${x - r} ${y}Q${x - r * 0.15} ${y - r * 0.15} ${x} ${y - r}z`;
const plump4 = (x, y, rx, ry) => `M${x} ${y - ry}Q${x + rx * 0.35} ${y - ry * 0.3} ${x + rx} ${y}Q${x + rx * 0.35} ${y + ry * 0.3} ${x} ${y + ry}Q${x - rx * 0.35} ${y + ry * 0.3} ${x - rx} ${y}Q${x - rx * 0.35} ${y - ry * 0.3} ${x} ${y - ry}z`;
const Note = () => (
  <Svg w={17} h={17} stroke="#f0f1f5" strokeWidth="1.500"><path d="M3.500 1.500h10q2 0 2 2v10.500q0 1.500-1.500 1.500H2.500Q1 15.500 1 14V6h2.500z" fill="#7a7f90" /><path d="M3.500 5.500V14M6 8h6M6 11.500h7" /></Svg>
);
const Store = () => (
  <Svg w={18} stroke="#f0f1f5" strokeWidth="1.400"><path d="M3 1h12l2 6q0 2-2 2-1.500 0-2-1-.6 1-2 1t-2-1q-.6 1-2 1T5 8q-.5 1-2 1Q1 9 1 7z" fill="#7a7f90" /><path d="M2.500 9v6.500q0 1.500 1.500 1.500h10q1.500 0 1.500-1.500V9M7 17v-5h4v5" /></Svg>
);
const PinMark = () => (
  <Svg w={9} h={15} stroke="#222" strokeWidth="1.100" strokeLinejoin="round"><path d="M1.500.6h6M2.500 1v4.500L1 9h7L6.500 5.500V1M4.500 9v5.500" /></Svg>
);
const EditNote = () => (
  <Svg w={12} h={12} stroke="#444" strokeWidth="1.100"><path d="M11 5V1H2L1 2v9h5M3.500 4.500h4M3.500 7h2" /><path d="m6.500 11 .5-2 4-3.500 1 1L8 10.500z" /></Svg>
);
const TicketGear = () => (
  <Svg w={15} h={15} stroke="currentColor" strokeWidth="1.200"><path d="M6 13.500H1.500V1H3l1.500 2L6 1.500 7.500 3 9 1h1v4" /><circle cx="10.200" cy="10" r="3.200" fill="#cfd2df" strokeDasharray="1.700 .8" strokeWidth="1.800" /><circle cx="10.200" cy="10" r="1.300" /></Svg>
);
const Zia = () => (
  <Svg w={17} h={12} stroke="currentColor" strokeWidth="1.100" strokeLinejoin="round"><path d="M1 2h5L1 10h4.500l3-5.500M8 10l5.500-7L16 9.500h-3q-2-.5-1-2.500M6.500 9.500h3M9 1.500v1" /></Svg>
);
const Bulb = () => (
  <Svg w={16} h={15} stroke="currentColor" strokeWidth="1.100"><path d="M8 3a4.300 4.300 0 0 0-2.800 7.500V12q0 2 2.800 2t2.800-2v-1.500A4.300 4.300 0 0 0 8 3z" fill="#dcdfe9" /><path d="M8 0v1.500M2.500 2l1.200 1.200M13.500 2l-1.200 1.200M0 7.500h2M14 7.500h2" /></Svg>
);
const Bubble = () => (
  <Svg w={15} h={14} stroke="currentColor" strokeWidth="1.200" strokeLinejoin="round"><path d="M1 13V6.500A5.500 5.500 0 0 1 6.500 1H9a5.300 5.300 0 0 1 0 10.600H4z" fill="#e6e8f0" /><path d="M5 5h6M5 8h4" /></Svg>
);
const Tree = () => (
  <Svg w={10} h={10} stroke="#777d8e"><circle cx="5" cy="2" r="1.300" /><circle cx="2" cy="8" r="1.300" /><circle cx="8" cy="8" r="1.300" /><path d="M5 3.500V5L2.500 6.800M5 5l2.500 1.800" /></Svg>
);
const TwoLines = ({ c }) => (
  <Svg w={15} h={8} stroke={c} strokeWidth="1.200"><path d="M.5 1h14M.5 7h9" /></Svg>
);
const Face = ({ fill, sad }) => (
  <Svg w={24}><circle cx="12" cy="12" r="11" fill={fill} stroke="#242c14" strokeWidth="1.800" /><circle cx="8" cy="8.500" r="1.900" fill="#1c2410" /><circle cx="16" cy="8.500" r="1.900" fill="#1c2410" /><path d={sad ? "M6.500 18q5.500-6 11 0" : "M6 14q6 7 12 0"} stroke="#1c2410" strokeWidth="1.600" /></Svg>
);
const B = "#1797f5";
const PenAI = () => (
  <Svg w={18} stroke="#444" strokeWidth=".9"><path d="m1.500 13 1-7L7 3.500 10.500 6 9 10.500zM1.500 13l4-4M5 6.500l2 2" /><path d={star4(15, 5, 2.500) + star4(7, 15, 2.300) + star4(14.500, 14, 3)} fill={B} stroke="none" /><path d="m6 2.500 2-2L11.500 3 10 5z" fill="#111" /></Svg>
);
const Panel = () => (
  <Svg w={14} stroke="#333" strokeWidth="1.200"><rect x="1" y="1" width="12" height="12" rx="1.500" /><path d="M1 4h12M7 6.500v4M5 8.500h4" /></Svg>
);
const Pen = () => (
  <Svg w={12} h={13}><path d="m2.500 8 1-2L9 .5 10.500 2 5 7.500z" fill="#4d4f5c" /><path d="M.5 9.500q1.500-2 3-1" stroke="#4d4f5c" /><path d="M1 9.500l3-1M4 12h7.500" stroke={B} strokeWidth="2" /></Svg>
);
const Bucket = () => (
  <Svg w={14} h={12}><path d="m1 5 5-3.500 5 3.500-5 5z" fill="#fff" stroke="#4d4f5c" strokeWidth="1.300" /><path d="M1.500 5.500h9L6 10.500z" fill={B} /><path d="M3 2.500q0-2 2-2" stroke="#4d4f5c" /><circle cx="12.500" cy="8.500" r="1.300" fill={B} /></Svg>
);
const Lines = ({ blue, grey, w = 13 }) => (
  <Svg w={w} h={12} strokeWidth="1.300"><path d={grey} stroke="#5d5f6c" /><path d={blue} stroke={B} /></Svg>
);
const Picture = () => (
  <Svg w={13} h={11}><rect x=".6" y=".6" width="11.800" height="9.800" stroke="#8a8d9a" strokeWidth="1.200" /><path d="m2 9 3-5 2 2.500L8.500 5 11 9z" fill={B} /><circle cx="9.500" cy="3" r="1" fill={B} /></Svg>
);
const Eraser = () => (
  <Svg w={13} h={12}><path d="m4 5-3 3 2.500 2.500H7" stroke="#4d4f5c" /><path d="m8.500 1 3.500 3.500L8 9 4.500 5z" fill={B} stroke="#4d4f5c" strokeWidth=".8" /><path d="M7 11h5" stroke="#4d4f5c" strokeDasharray="2 1" /></Svg>
);
const FontBrush = () => (
  <Svg w={13} h={13}><path d="M1.500 3v9M0 3h6.500M0 12h3.500M1.500 7.300h4" stroke="#4d4f5c" strokeWidth="1.700" /><path d="M9.500 0v5" stroke="#4d4f5c" strokeWidth="1.500" /><path d="M7 5h5v3H7zM6 11h6" stroke={B} strokeWidth="1.500" fill={B} /></Svg>
);
const ChatBubbles = () => (
  <Svg w={16} h={14}><path d="M1 0h9q1 0 1 1v6q0 1-1 1H5l-3 2.500V8H1Q0 8 0 7V1q0-1 1-1z" fill="#fff" /><path d="M12.500 3.500H14q1 0 1 1v6q0 1-1 1v2.500l-3-2.500H7.500q-1 0-1-1v-1h5q1 0 1-1z" fill="#fff" /><path d="M2.500 3h6M2.500 5.300h5" stroke="#1574d8" /></Svg>
);
const WindowsLogo = () => (
  <Svg w={16}><path d="M0 2.300 7.500 1.300V7.600H0zM8.300 1.200 16 0v7.600H8.300zM0 8.400h7.500v6.300L0 13.700zM8.300 8.400H16V16l-7.700-1.100z" fill="#fff" /></Svg>
);
const TaskView = () => (
  <Svg w={16} h={15} stroke="#fff" strokeWidth="1.200"><path d="M1 0v2.500h10V0M1 15v-2.500h10V15M1 4.700h10v5.600H1zM14.500 0v2.500M14.500 8v7" /><rect x="13.500" y="4" width="2" height="2.500" fill="#fff" stroke="none" /></Svg>
);
const Edge = () => (
  <Svg w={24}><circle cx="12" cy="12" r="11.700" fill="#1b8fdc" /><path d="M.6 10C2 3 8-.5 14 .5c6 .8 10 5.500 9.700 10.500-.3 3.500-3 5-6 5-2.500 0-3.700-1-2.700-2 1.500-1.500.5-5-3.500-6C7 7 2.500 8 .6 10z" fill="#38c6c0" /><path d="M14 .5c6 .8 10 5.500 9.700 10.500-.3 3.500-3 5-6 5-2.500 0-3.700-1-2.700-2 1.500-1.500 1-4.500-1.500-5.500C20 9 19 2.500 14 .5z" fill="#6ade6a" /><path d="M10.500 8.500c-3 3-3 9 2.500 11.500 3 1.500 6.500.8 9-1-3 4-9 5-13.500 2.500C3 18 3.500 10 10.500 8.500z" fill="#0d4f9c" /></Svg>
);
const Explorer = () => (
  <Svg w={22} h={20}><path d="M0 1h8l2 2h12v16H0z" fill="#f0a818" /><path d="M0 5h22v14H0z" fill="#ffd766" /><path d="M4 19v-6q0-2 2-2h10q2 0 2 2v6h-4v-4H8v4z" fill="#3a97dd" /></Svg>
);
const StoreBag = () => (
  <Svg w={24} h={24}><path d="M6 6V2.500q0-1 1-1h9q1 0 1 1V6" stroke="#1fa5e8" strokeWidth="2.200" /><path d="M0 5h24v16q0 2-2 2H2q-2 0-2-2z" fill="#f3f3f3" /><path d="M7 9h4.500v4.500H7z" fill="#e8501f" /><path d="M12.500 9H17v4.500h-4.500z" fill="#7db700" /><path d="M7 14.500h4.500V19H7z" fill="#1ba1e8" /><path d="M12.500 14.500H17V19h-4.500z" fill="#fbb900" /></Svg>
);
const MailIcon = () => (
  <Svg w={24} h={20}><path d="M0 5 12 0l12 5v15H0z" fill="#fff" /><path d="M0 5h22l-10 6z" fill="#1d3040" /><path d="M10 9.500 22 15l-10-4z" fill="#1d3040" /></Svg>
);
const ChromeIcon = () => (
  <Svg w={24}><circle cx="12" cy="12" r="12" fill="#fbc116" /><path d="M1.600 6A12 12 0 0 1 22.400 6H12l-5.200 9z" fill="#e8402f" /><path d="M1.600 6A12 12 0 0 0 12 24l5.200-9H6.800z" fill="#2da44e" /><circle cx="12" cy="12" r="6" fill="#fff" /><circle cx="12" cy="12" r="4.700" fill="#3b7ded" /></Svg>
);
const Excel = () => (
  <Svg w={22}><path d="M1 1h20v14l-5 6H1z" fill="#e9f5e9" stroke="#47a055" strokeWidth="1.500" /><path d="M13 5h7M13 9h7M13 13h7" stroke="#8fcf96" strokeWidth="2" /><path d="m4 4 8 12M12 4 4 16" stroke="#1e8038" strokeWidth="3" /><path d="m12 14 9-3v5l-5 5z" fill="#fff" stroke="#8fcf96" strokeWidth=".8" /></Svg>
);
const Wifi = () => (
  <Svg w={14} h={14} stroke="#fff" strokeWidth="1.200"><path d="M1 13A12.500 12.500 0 0 1 13 2M4 13a9 9 0 0 1 9-8M7 13a6 6 0 0 1 6-5" /><circle cx="11.500" cy="12" r="1.500" fill="#fff" stroke="none" /></Svg>
);
const Battery = () => (
  <Svg w={16} h={12} stroke="#fff" strokeWidth="1.200"><path d="M7 3.500h7.500v7h-11V8M15.500 5.500v3M1 1v3M4 1v3M0 4h5v2L4 7H1.500z" /><rect x="7" y="5.500" width="5.500" height="3" fill="#fff" stroke="none" /></Svg>
);
const Update = () => (
  <Svg w={18} h={16} stroke="#fff" strokeWidth="1.300"><path d="M1 3 16 1v10M1 3v11h8M6 8.500q1-3 5-1.500l.5-2M11 9q-1 2.500-4.500 1.500L6 12" /><circle cx="12.500" cy="12.500" r="3.500" fill="#e81123" stroke="none" /></Svg>
);
const Cards = () => (
  <Svg w={15} h={14} stroke="#777" strokeWidth="1.100"><rect x="4" y="3" width="9" height="10" rx="1.500" /><path d="M6 6h5M6 8.500h5M4 11Q1 9 2 4M3 3q1-2.500 9-1.500" /></Svg>
);
const ReplyNote = () => (
  <Svg w={14} h={15} stroke="#222" strokeWidth="1.100"><path d="M12 5V2q0-1-1-1H2Q1 1 1 2v9q0 1 1 1h3l2 2M12 9v3H8M13 7H5.500M8 4.500 5.500 7 8 9.500" /></Svg>
);
const NoteCheck = () => (
  <Svg w={17} h={14} stroke="#222" strokeWidth="1.100"><path d="M13 5V2q0-1-1-1H2Q1 1 1 2v9q0 1 1 1h6M4 4h6M4 7h4" /><circle cx="12.500" cy="9.500" r="3.500" /><path d="m11 9.500 1 1 2-2" /></Svg>
);

/* ---------- data ---------- */

const tabs = [
  ["Files", <Badge16 $bg="#0b5cff" $c="#fff"><FaDropbox size={13} /></Badge16>],
  ["Explore", <Maestro />], ["3RD W", <Drive />], ["Spam", <Gmail />], ["Search", <Asana />],
  ["iLove", <HeartFile />], ["Gene", <GenIcon />], ["Leads", <LeadIcon />],
  ["(1) #1", <DeskFavicon />, true],
  ["Deep", <Whale />], ["Deep", <Whale />], ["phot", <MapPin />],
];

const extensions = [
  [<Disc />, 36], [<Apollo />, 36], [<Badge16 $c="#4a90ff" $size={17}>C</Badge16>, 36], [<Ball />, 36],
  [<Brain />, 36], [<RobotBadge />, 36], [<Knot />, 36], [<Blobs />, 36],
  [<DownArrow />, 36], [<ListAlert />, 40], [<Folders />, 32], [<Puzzle />, 38], [<Divider />, 16],
];

const nav = [["Knowledge Base", 145], ["Contracts", 96], ["Customers", 105], ["Analytics", 91], ["Activities", 93], ["Community", 113]];

const railIcons = [
  <TicketGear />, <Zia />, <Bulb />, <Bubble />,
  <History size={14} strokeWidth={1.800} />, <CircleCheck size={15} strokeWidth={1.700} fill="#e3e5ee" />, <Atom size={16} strokeWidth={1.700} />,
];

const firstArticle = [
  "Zoho Desk packs a bunch of features that", "are expressly there to help you respond to",
  "tickets smartly. The first of these, you've", "already discovered: Auto-Suggest",
  "Articles. Zoho Desk pulls up relevant", "articles on the ticket's content—so you", "can save ...",
];
const secondArticle = [
  "Answer: We offer a wide range of", "products, including smartphones, tablets,",
  "accessories (such as chargers, earphones,", "and cases), and other electronic gadgets.",
  "Our inventory includes both new and", "refurbished devices from top brands like", "Apple",
];

function Browser() {
  return (
    <>
      <TabStrip>
        <RoundButton><ChevronDown size={13} color="#fff" strokeWidth={3} /></RoundButton>
        <Tabs>
          {tabs.map(([title, icon, active], i) => (
            <TabSlot key={i}>
              <Tab $active={active}>
                <Slot $w={16}>{icon}</Slot>
                <TabTitle>{title}</TabTitle>
                <X size={12} strokeWidth={2.500} />
              </Tab>
              <TabSeparator $hidden={i === 7 || i === 8} />
            </TabSlot>
          ))}
        </Tabs>
        <RoundButton $circle><Plus size={15} color="#4d8f8c" strokeWidth={2} /></RoundButton>
        <WindowControls>
          <WindowButton $bg="rgba(20, 80, 80, 0.75)"><Svg w={10}><path d="M0 5h10" stroke="#9fc4c2" /></Svg></WindowButton>
          <WindowButton $bg="rgba(25, 100, 98, 0.6)"><Svg w={10} stroke="#9fc4c2"><path d="M.5 2.500h7v7h-7zM2.500 2.500v-2h7v7h-2" /></Svg></WindowButton>
          <WindowButton $bg="rgba(30, 110, 108, 0.35)"><Svg w={10} stroke="#9fc4c2"><path d="m0 0 10 10M10 0 0 10" /></Svg></WindowButton>
        </WindowControls>
      </TabStrip>
      <Toolbar>
        <Slot $w={44}><ArrowLeft size={17} strokeWidth={2.300} /></Slot>
        <Slot $w={28}><ArrowRight size={17} color="#3e7a77" /></Slot>
        <Slot $w={40} $justify="flex-end"><Slot $w={36}><RotateCw size={15} strokeWidth={2.500} /></Slot></Slot>
        <Omnibox>
          <SiteInfo><Tune /></SiteInfo>
          <Url><b>desk.zoho.com</b>/agent/nkyconcepts/nkyconcepts/tickets/details/1085678000000317001</Url>
          <Star size={16} color="#2f4a48" strokeWidth={1.700} />
        </Omnibox>
        {extensions.map(([icon, w], i) => <Slot key={i} $w={w}>{icon}</Slot>)}
        <Slot $w={36}><ChromeAvatar>N</ChromeAvatar></Slot>
        <Slot $w={36}><Svg w={4} h={16}><circle cx="2" cy="2.500" r="1.700" fill="#111" /><circle cx="2" cy="8" r="1.700" fill="#111" /><circle cx="2" cy="13.500" r="1.700" fill="#111" /></Svg></Slot>
      </Toolbar>
      <Bookmarks>
        <Slot $w={48}><AppsGrid /></Slot>
        <Slot $w={16} $justify="flex-start"><Divider $color="#4c6f9a" /></Slot>
        <Bookmark $w={154} $track={-0.060}><WebMdMark><i>Web</i>MD</WebMdMark>Stress: Ways to Man...</Bookmark>
        <Bookmark $w={154}><Badge16 $c="#ee7d1f" $weight={600} $size={11}>ND</Badge16>Translate and Learn...</Bookmark>
        <Bookmark $w={155} $track={-0.060}><Doll />Dobbys Signature:...</Bookmark>
        <Bookmark $w={153} $track={-0.150}><FaLeaf size={15} color="#b4d81d" />Greenlife Herbal Pro...</Bookmark>
        <Bookmark $w={104} $track={0.050}><Badge16 $bg="#fb6a10" $c="#fff" $r={3}><FaBloggerB size={11} /></Badge16>Mak Is Back!</Bookmark>
        <Bookmark $w={154} $track={0.050}><FaGlobeAmericas size={15} color="#0a0f12" />Find Recipes With 1...</Bookmark>
        <Bookmark $w={262} $track={-0.040}><Badge16 $bg="#fff" $c="#1420a8" $size={9}>MT</Badge16>Correct Weight Han...</Bookmark>
        <Slot $w={24}><ChevronsRight size={16} strokeWidth={2.400} /></Slot>
        <Slot $w={24}><Divider $color="#4c6f9a" /></Slot>
        <Slot $w={4} />
        <Bookmark $w={114} $track={-0.100}><Folder size={18} color="#36514f" />All Bookmarks</Bookmark>
      </Bookmarks>
    </>
  );
}

function Header() {
  return (
    <AppHeader>
      <Slot $w={55}><DeskMark /></Slot>
      <HeaderRule />
      <NavItem $w={77}><NavActive>Tickets</NavActive></NavItem>
      {nav.map(([label, w]) => <NavItem key={label} $w={w}>{label}</NavItem>)}
      <Slot $w={78} $justify="flex-start"><TwoLines c="#e8eaf0" /></Slot>
      <Slot $w={114} $justify="flex-start"><Text $size={14} $weight={600} $track={-0.380}>Nkyconcepts</Text></Slot>
      <AddButton>
        <AddPart $w={32}><Plus size={16} strokeWidth={1.800} /></AddPart>
        <AddPart $w={24} $rule><Caret $c="#fff" /></AddPart>
      </AddButton>
      <Slot $w={6} />
      <Slot $w={52}><Search size={19} color="#e8eaf0" strokeWidth={1.800} fill="#5d6378" /></Slot>
      <Slot $w={52}><Relative><Note /><CountBadge>1</CountBadge></Relative></Slot>
      <Slot $w={52}><Relative><Store /><Stars width="20" height="22"><path d={star4(4, 5, 4) + star4(14, 5, 5) + star4(14, 15, 5)} fill="#d8a91c" /></Stars></Relative></Slot>
      <Slot $w={52}><Settings size={19} color="#e8eaf0" strokeWidth={1.900} /></Slot>
      <Slot $w={54}><Avatar $s={32} $font={16} $ring>N<Online /></Avatar></Slot>
      <Slot $w={52}><Dots9 /></Slot>
    </AppHeader>
  );
}

function TicketList() {
  return (
    <ListPane>
      <ListHeader>
        <SquareButton><ChevronLeft size={14} strokeWidth={2.300} /></SquareButton>
        <ViewPicker>
          <Text $size={16} $weight={500} $track={-0.350} $color="#000">Select a view</Text>
          <Caret $c="#777d90" $m="3px 0 0 7px" />
        </ViewPicker>
        <SquareButton><PinMark /></SquareButton>
      </ListHeader>
      <TicketCard>
        <CardTop>
          <Text $size={15} $track={-0.180} $color="#111">Faulty Air conditioner</Text>
          <Slot $w={30}><Avatar $s={30} $font={15}>N</Avatar></Slot>
        </CardTop>
        <MetaRow $gap={8} $h={18}><TicketId>#101</TicketId><Dot /><span>Isioma Chukwuka</span><Dot /></MetaRow>
        <MetaRow $h={22}>Somotex Nig. Ltd.</MetaRow>
        <MetaRow $h={20} $gap={3}><Svg w={9}><circle cx="4.500" cy="4.500" r="3.900" stroke="#f5913e" strokeWidth="1.100" /><path d="M4.500 2v3l2 1" stroke="#f5913e" /></Svg>Tomorrow 01:54 AM</MetaRow>
        <CardFooter>
          <StatusButton><Text $size={13} $weight={500} $track={-0.350}>Open</Text><Caret $s={3} $c="#aab" $m="2px 0 0 6px" /></StatusButton>
          <Slot $w={137} />
          <EditNote />
          <Underlined><Svg w={13} h={12} stroke="#444"><path d="M0 4.500h7M0 8.500h7M9 1.500l1.500-1V7" /></Svg></Underlined>
        </CardFooter>
      </TicketCard>
    </ListPane>
  );
}

function ArticlesPane() {
  return (
    <Articles>
      <ArticlesTitle>Suggested Articles</ArticlesTitle>
      <SearchField>Search Suggested Articles</SearchField>
      <ArticleScroll>
        <ArticleList>
          <ArticleItem $h={232}>
            <ArticleHeading>Answering your first ticket.</ArticleHeading>
            {firstArticle.map((l) => <ArticleLine key={l}>{l}</ArticleLine>)}
            <Category><Tree />General</Category>
          </ArticleItem>
          <ArticleItem $h={250}>
            <ArticleHeading>What types of products do you sell?</ArticleHeading>
            {secondArticle.map((l) => <ArticleLine key={l}>{l}</ArticleLine>)}
          </ArticleItem>
        </ArticleList>
        <ScrollTrack><ScrollUp /><ScrollThumb $h={359} $mt={6} /><Caret $c="#555" /></ScrollTrack>
      </ArticleScroll>
    </Articles>
  );
}

function TicketHead() {
  return (
    <TicketHeader>
      <TitleRow>
        <PhoneCall size={20} strokeWidth={1.500} fill="#d9dbe4" />
        <Title>Faulty Air conditioner</Title>
        <SquareButton $line="#cbd6e2"><Svg w={14} h={4} stroke="#555"><circle cx="2" cy="2" r="1.300" /><circle cx="7" cy="2" r="1.300" /><circle cx="12" cy="2" r="1.300" /></Svg></SquareButton>
        <Slot $w={9} />
        <SquareButton $line="#cbd6e2"><Layers size={13} strokeWidth={1.600} /></SquareButton>
      </TitleRow>
      <InfoRow>
        <IdTag>#101</IdTag>
        <Slot $w={18}><Dot /></Slot>
        <Slot $w={123} $justify="flex-start"><Text $size={13} $track={-0.180}>Isioma Chukwuka</Text><Slot $w={17}><Dot /></Slot></Slot>
        <Svg w={18} h={10} stroke="#444"><circle cx="5" cy="5" r="4.200" /><path d="M5 2v3l2 1M11 2.500h7M11 5h5M11 7.500h4" /></Svg>
        <Slot $w={77} $justify="flex-start"><Slot $w={3} /><Text $size={13} $weight={500} $track={-0.320}>01:54 AM</Text><Slot $w={16}><Dot /></Slot></Slot>
        <Timer>
          <PlayCell><Svg w={7} h={9}><path d="M0 0v9l6.500-4.500z" fill="#0b72ed" /></Svg></PlayCell>
          <Slot $w={90}><Text $size={12.500} $weight={500} $track={0}>00 : 00 : 00</Text></Slot>
        </Timer>
      </InfoRow>
      <DetailTabs>
        <ActiveDetailTab><Text $size={11.500} $weight={500} $track={0.090}>1 CONVERSATION</Text><Caret $c="#888" $s={3.500} $m="0 0 0 9px" /></ActiveDetailTab>
        <DetailTab $w={109} $track={0.050}>RESOLUTION</DetailTab>
        <DetailTab $w={101.5} $track={-0.100}>TIME ENTRY</DetailTab>
        <DetailTab $w={111.5} $track={-0.080}>ATTACHMENT</DetailTab>
        <DetailTab $w={92} $track={-0.060}>ACTIVITY</DetailTab>
        <Slot $w={14}><TwoLines c="#555b6b" /></Slot>
      </DetailTabs>
    </TicketHeader>
  );
}

const StrikeBar = styled.i`
  position: absolute;
  left: -1px;
  right: -1px;
  top: 7px;
  height: 1.5px;
  background: ${B};
`;

const Check = styled.svg`
  position: absolute;
  right: -2px;
  bottom: -1px;
`;

function Format() {
  return (
    <FormatBar>
      <FormatRow $h={28}>
        <Slot $w={30}><PenAI /></Slot>
        <Slot $w={2}><Divider $color="#d3dae6" /></Slot>
        <Slot $w={31}><Panel /></Slot>
        <Slot $w={33}><Glyph>B</Glyph></Slot>
        <Slot $w={25}><Glyph $italic>I</Glyph></Slot>
        <Slot $w={33}><Glyph $size={11} $under>U</Glyph></Slot>
        <Slot $w={26}><Relative><Glyph>A</Glyph><StrikeBar /></Relative></Slot>
        <Slot $w={31}><Pen /></Slot>
        <Slot $w={28}><Bucket /></Slot>
        <Slot $w={29}><Glyph $size={12.500}>F</Glyph></Slot>
        <Slot $w={5} />
        <Select $w={44}>10<Caret $c="#111" /></Select>
        <Slot $w={39}><Lines grey="M0 3.500h12M0 7h12" blue="M0 1h7M0 10.500h7M0 7h4" /></Slot>
        <Slot $w={19}><Relative><Lines w={4} grey="" blue="M0 .7h4M0 11.300h4M2 0v12" /><Glyph $size={7.500}>Aa</Glyph></Relative></Slot>
        <Slot $w={39}><Lines grey="M4 1.500h9M4 6h9M4 10.500h9" blue="M0 1.500h2M0 6h2M0 10.500h2" /></Slot>
        <Slot $w={19}><Lines grey="M0 1h12M6 4.300h6M6 7.600h6M0 11h12" blue="M0 6h4M2 4l2 2-2 2" /></Slot>
        <Slot $w={38}><Lines grey="M0 1.500h8M0 6h8M0 10.500h8" blue="M11 1v10M9.500 2.500 11 1l1.500 1.500M9.500 9.500 11 11l1.500-1.500" /></Slot>
        <Slot $w={20}><Picture /></Slot>
        <Slot $w={38}><Eraser /></Slot>
        <Slot $w={21}><FontBrush /></Slot>
        <Slot $w={9} />
        <Select $w={65}>Insert<Caret $c="#111" /></Select>
        <Slot $w={38}><Relative><Glyph $size={8.800}>ABC</Glyph><Check width="9" height="7"><path d="m1 3 2.500 3L8 1" stroke={B} strokeWidth="1.700" fill="none" /></Check></Relative></Slot>
      </FormatRow>
      <FormatRow $h={23}>
        <Slot $w={27}><Caret $c="#111" $s={4.500} /></Slot>
        <Slot $w={26}><Svg w={4} h={12}><circle cx="2" cy="1.500" r="1.200" fill="#70758a" /><circle cx="2" cy="6" r="1.200" fill="#70758a" /><circle cx="2" cy="10.500" r="1.200" fill="#70758a" /></Svg></Slot>
      </FormatRow>
    </FormatBar>
  );
}

function Reply() {
  return (
    <TicketBody>
      <Editor>
        <AddressRow $h={38} $pb={1} $line="dotted #dde3ea">
          <FieldName>From</FieldName>
          <Chip $w={328} $track={-0.420}><Initials>NK</Initials>Nkyconcepts&lt;support@nkyconcepts.zohodesk.com&gt;</Chip>
          <Slot $w={227} $justify="flex-end"><Text $size={13} $weight={500} $track={-0.400} $color="#83889a">Saved @ 01:58 AM</Text><Caret $c="#83889a" $m="0 0 0 5px" /></Slot>
        </AddressRow>
        <AddressRow $h={36} $line="solid #cbd6e4">
          <FieldName>Recipients</FieldName>
          <Chip $w={192} $track={-0.340}><Initials>CH</Initials>chukwukaisioma@gmail.com</Chip>
          <Chip $w={242} $track={-0.330}><Initials>SU</Initials>support@nkyconcepts.zohodesk.com</Chip>
        </AddressRow>
        <Format />
        <MessagePane>
          <Message>
            <Paragraph>We are so sorry for the inconvenience. I will need all necessary documents to ensure I can help or will be</Paragraph>
            <Paragraph $mb={15}>treated by a technical team</Paragraph>
            <Paragraph><Text $color="#0b72ed">How would you rate our customer service?</Text></Paragraph>
            <RatingRow>
              <Rating $w={80}><Face fill="#a9dc5b" />Good</Rating>
              <Rating $w={71}><Face fill="#ee6c3a" sad />Bad</Rating>
            </RatingRow>
            <Paragraph>---- on Thu, 06 Feb 2025 01:54:06 +0100 <b>Isioma <Misspelt>Chukwuka&lt;chukwukaisioma@gmail.com</Misspelt>&gt;</b> wrote ----</Paragraph>
            <Quote>She bought a faulty Air conditioner</Quote>
          </Message>
          <ScrollTrack $pad="0"><ScrollThumb $h={205} /></ScrollTrack>
        </MessagePane>
        <EditorFooter>
          <Paperclip size={16} strokeWidth={1.500} />
          <Slot $w={23} />
          <CloudDownload size={17} strokeWidth={1.500} />
          <Slot $w={350} />
          <SendButton>
            <AddPart $w={109}><Text $size={13.500} $weight={600} $track={-0.200}>Send</Text></AddPart>
            <AddPart $w={26} $rule><Caret $c="#fff" $s={3.500} /></AddPart>
          </SendButton>
          <CancelButton>Cancel</CancelButton>
        </EditorFooter>
      </Editor>
      <ScrollTrack $w={17} $pad="7px 0 0"><ScrollUp /><ScrollThumb $h={294} $mt={6} /></ScrollTrack>
    </TicketBody>
  );
}

function Bottom() {
  return (
    <>
      <ChatBar>
        <ChatTab $ml={-3}><FaComments size={14} />Chats</ChatTab>
        <ChatTab><FaUsers size={14} />Channels</ChatTab>
        <ChatTab><FaUser size={14} />Contacts</ChatTab>
        <ChatInput>Here is your Smart Chat (Ctrl+Space)</ChatInput>
        <StatusCell $w={51}><Keyboard size={18} strokeWidth={1.500} /></StatusCell>
        <StatusCell $w={47}><NoteCheck /></StatusCell>
        <StatusCell $w={45}><Clock size={15} strokeWidth={1.600} /></StatusCell>
        <StatusCell $w={40}><Megaphone size={15} strokeWidth={1.600} /></StatusCell>
        <StatusCell $w={50}><ReplyNote /></StatusCell>
        <StatusCell $w={108} $pl={5} $blue><ChatBubbles />Live Chat</StatusCell>
        <StatusCell $w={49}><Svg w={16} stroke="#111" strokeWidth="1.300"><circle cx="8" cy="8" r="7" /><circle cx="8" cy="4" r="1.200" fill="#111" stroke="none" /><path d="M4 6.500h8M6.700 6.500v3L5.500 13M9.300 6.500v3l1.200 3.500M7 9h2" /></Svg></StatusCell>
        <StatusCell $w={49}><Svg w={12}><path d="M5 1a5 5 0 1 0 6 7.500A5 5 0 0 1 5 1z" fill="#111" /><path d={star4(9, 3.500, 2)} fill="#111" /></Svg></StatusCell>
        <StatusCell $w={30}><Cards /></StatusCell>
        <StatusCell $w={29} $pl={8}><Search size={13} color="#777" /></StatusCell>
      </ChatBar>
      <Taskbar>
        <TaskSlot $w={48}><WindowsLogo /></TaskSlot>
        <TaskSearch><Svg w={17} h={17} stroke="#222" strokeWidth="1.300"><circle cx="10.500" cy="6.500" r="5.500" /><path d="m6.500 10.500-6 6" /></Svg>Type here to search</TaskSearch>
        <TaskSlot $w={49}><Svg w={17}><circle cx="8.500" cy="8.500" r="6.800" stroke="#fff" strokeWidth="2" /></Svg></TaskSlot>
        <TaskSlot $w={48}><TaskView /></TaskSlot>
        <TaskSlot $w={54}><Edge /></TaskSlot>
        <TaskSlot $w={44}><Explorer /></TaskSlot>
        <TaskSlot $w={52}><StoreBag /></TaskSlot>
        <TaskSlot $w={48}><MailIcon /></TaskSlot>
        <TaskSlot $w={49}><ChromeIcon /></TaskSlot>
        <TaskSlot $w={49}><Relative><FaWhatsapp size={25} color="#25d366" /><TaskBadge $x={16} $y={11}>15</TaskBadge></Relative></TaskSlot>
        <TaskSlot $w={48}><Excel /></TaskSlot>
        <TaskSlot $w={298} />
        <TaskSlot $w={22}><ChevronUp size={16} /></TaskSlot>
        <TaskSlot $w={25}><Update /></TaskSlot>
        <TaskSlot $w={24}><Battery /></TaskSlot>
        <TaskSlot $w={25}><Wifi /></TaskSlot>
        <TaskSlot $w={20}><Volume2 size={17} strokeWidth={1.500} /></TaskSlot>
        <ClockBlock>4:58 PM<br />2/5/2025</ClockBlock>
        <TaskSlot $w={45}><Relative><Svg w={16} h={17}><path d="M0 1h16v12H5l-3 3v-3H0z" fill="#fff" /><path d="M3 4.500h10M3 7.500h10M3 10.500h6" stroke="#1b2a45" /></Svg><TaskBadge $x={7} $y={7}>15</TaskBadge></Relative></TaskSlot>
        <TaskSlot $w={5} $justify="flex-start"><Svg w={1} h={40}><path d="M.5 0v40" stroke="#68748a" /></Svg></TaskSlot>
      </Taskbar>
    </>
  );
}

export default function App() {
  return (
    <Page>
      <GlobalStyle />
      <Browser />
      <Header />
      <Main>
        <TicketList />
        <Rail>
          {railIcons.map((icon, i) => <RailItem key={i}>{icon}{i === 2 && <RailMark />}</RailItem>)}
        </Rail>
        <ArticlesPane />
        <Ticket><TicketHead /><Reply /></Ticket>
      </Main>
      <Bottom />
      <SparkleButton><Svg w={26} h={28}><path d={plump4(16, 15, 9, 11.5) + plump4(4, 6, 4, 5) + plump4(8, 23.5, 3.5, 4.5)} fill="#fdd835" /></Svg></SparkleButton>
      <HintFrame><GreenTick /></HintFrame>
      <AssistantBubble><Svg w={32} h={28}><path d="M3 6q-3 4 1 6h24q4-2 1-6M4 16q-4 2-1 5M28 16q4 2 1 5" stroke="#0f9d76" strokeWidth="3" /></Svg></AssistantBubble>
      <SecondBubble />
      <ErrorPill>
        <PillHalf $c="#27375c"><FaFeatherAlt size={12} /></PillHalf>
        <PillHalf $bg="#e34432" $c="#fff">1</PillHalf>
      </ErrorPill>
      <Recorder>
        <RecorderItem $h={13}><Svg w={8}><path d="m0 8 1-5 4-2.500L8 0 7 4 4 7z" fill="#fff" /></Svg><Svg w={9} h={3}><path d="M0 1.500h2M3.500 1.500h2M7 1.500h2" stroke="#fff" strokeWidth="2" /></Svg></RecorderItem>
        <RecorderItem $h={22} $bg="#444"><FaCamera size={19} /></RecorderItem>
        <RecorderItem $h={32}><FaVideo size={19} /></RecorderItem>
        <RecorderItem $h={24}><Svg w={19} h={17}><path d="M0 0h16v2H2v12H0z" fill="#ccc" /><path d="M3 3h16v14H3z" fill="#fff" /></Svg></RecorderItem>
        <RecorderItem $h={30}><FaCog size={19} /></RecorderItem>
      </Recorder>
    </Page>
  );
}
